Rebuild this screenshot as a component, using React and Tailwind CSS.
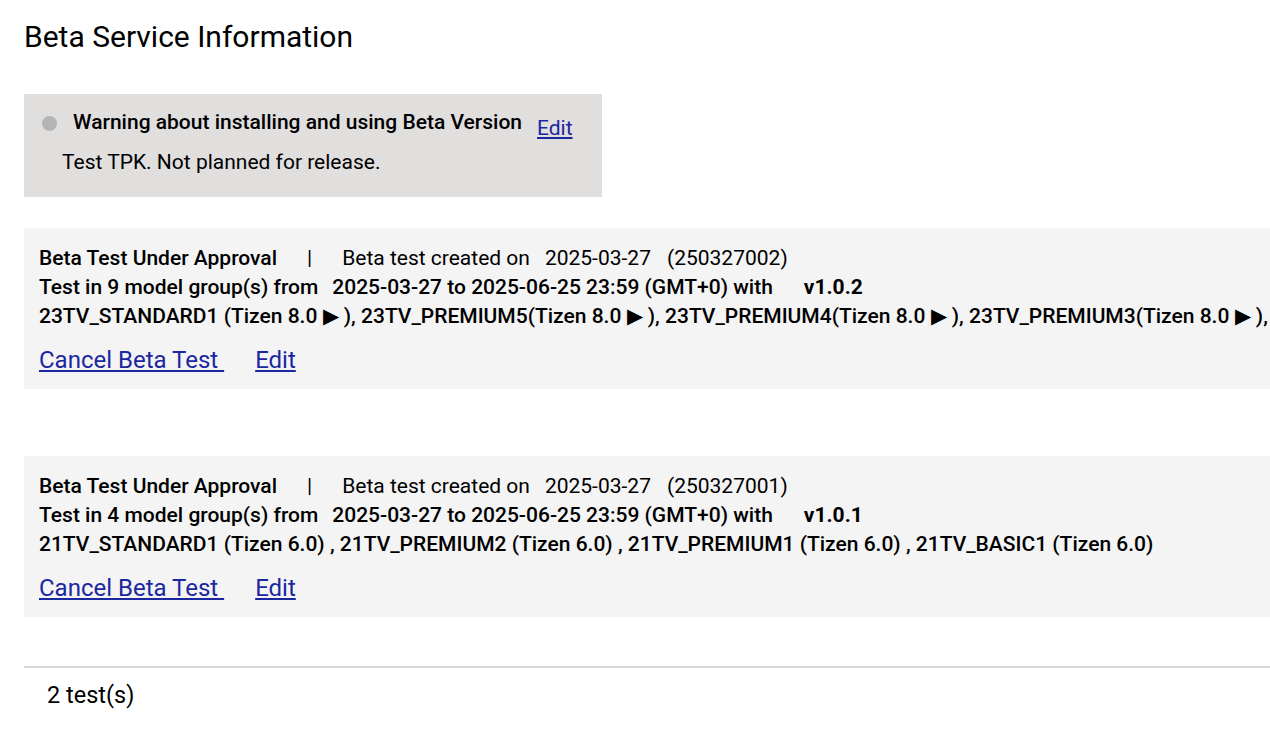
import React from "react";

const tests = [
  {
    id: "250327002",
    groups: 9,
    version: "v1.0.2",
    models: [
      "23TV_STANDARD1 (Tizen 8.0 ▶ )",
      "23TV_PREMIUM5(Tizen 8.0 ▶ )",
      "23TV_PREMIUM4(Tizen 8.0 ▶ )",
      "23TV_PREMIUM3(Tizen 8.0 ▶ ),",
    ],
  },
  {
    id: "250327001",
    groups: 4,
    version: "v1.0.1",
    models: [
      "21TV_STANDARD1 (Tizen 6.0) ",
      "21TV_PREMIUM2 (Tizen 6.0) ",
      "21TV_PREMIUM1 (Tizen 6.0) ",
      "21TV_BASIC1 (Tizen 6.0)",
    ],
  },
];

function TestCard({ test }) {
  return (
    <div className="bg-[#f4f4f4] pl-[15px] pt-[16px] pb-[14px]">
      <div className="text-[21px] leading-[29px] text-black whitespace-nowrap">
        <span className="font-medium">Beta Test Under Approval</span>
        <span className="ml-[30px]">|</span>
        <span className="ml-[30px]">Beta test created on</span>
        <span className="ml-[15px]">2025-03-27</span>
        <span className="ml-[16px]">({test.id})</span>
      </div>
      <div className="text-[21px] leading-[29px] text-black font-medium whitespace-nowrap">
        <span>Test in {test.groups} model group(s) from</span>
        <span className="ml-[14px]">2025-03-27 to 2025-06-25 23:59 (GMT+0) with</span>
        <span className="ml-[31px] font-bold">{test.version}</span>
      </div>
      <div className="text-[21px] leading-[29px] text-black font-medium whitespace-nowrap">
        {test.models.join(", ")}
      </div>
      <div className="mt-[14px] text-[24px] leading-[30px] text-[#1b27a0] whitespace-nowrap">
        <a href="#" className="underline">Cancel Beta Test </a>
        <a href="#" className="underline ml-[31px]">Edit</a>
      </div>
    </div>
  );
}

export default function App() {
  return (
    <div
      className="w-[1270px] h-[742px] overflow-hidden bg-white pl-[24px] pt-[18px]"
      style={{ fontFamily: "Roboto, 'Noto Sans', sans-serif" }}
    >
      <h1 className="text-[30px] leading-[38px] text-black">Beta Service Information</h1>

      <div className="mt-[38px] w-[578px] h-[103px] bg-[#e1dede] pl-[18px] pt-[15px]">
        <div className="flex items-start">
          <span className="mt-[7px] w-[15px] h-[15px] rounded-full bg-[#b4b4b4]" />
          <span className="ml-[16px] text-[21px] leading-[26px] font-medium text-black whitespace-nowrap">
            Warning about installing and using Beta Version
          </span>
          <a href="#" className="ml-[15px] mt-[6px] text-[21px] leading-[26px] text-[#1b27a0] underline">
            Edit
          </a>
        </div>
        <div className="ml-[20px] mt-[8px] text-[21px] leading-[26px] text-black whitespace-nowrap">
          Test TPK. Not planned for release.
        </div>
      </div>

      <div className="mt-[31px]">
        <TestCard test={tests[0]} />
      </div>
      <div className="mt-[67px]">
        <TestCard test={tests[1]} />
      </div>

      <div className="mt-[49px] border-t-2 border-[#d6d6d6]" />
      <div className="pl-[23px] pt-[12px] text-[23.5px] leading-[30px] text-black">2 test(s)</div>
    </div>
  );
}
